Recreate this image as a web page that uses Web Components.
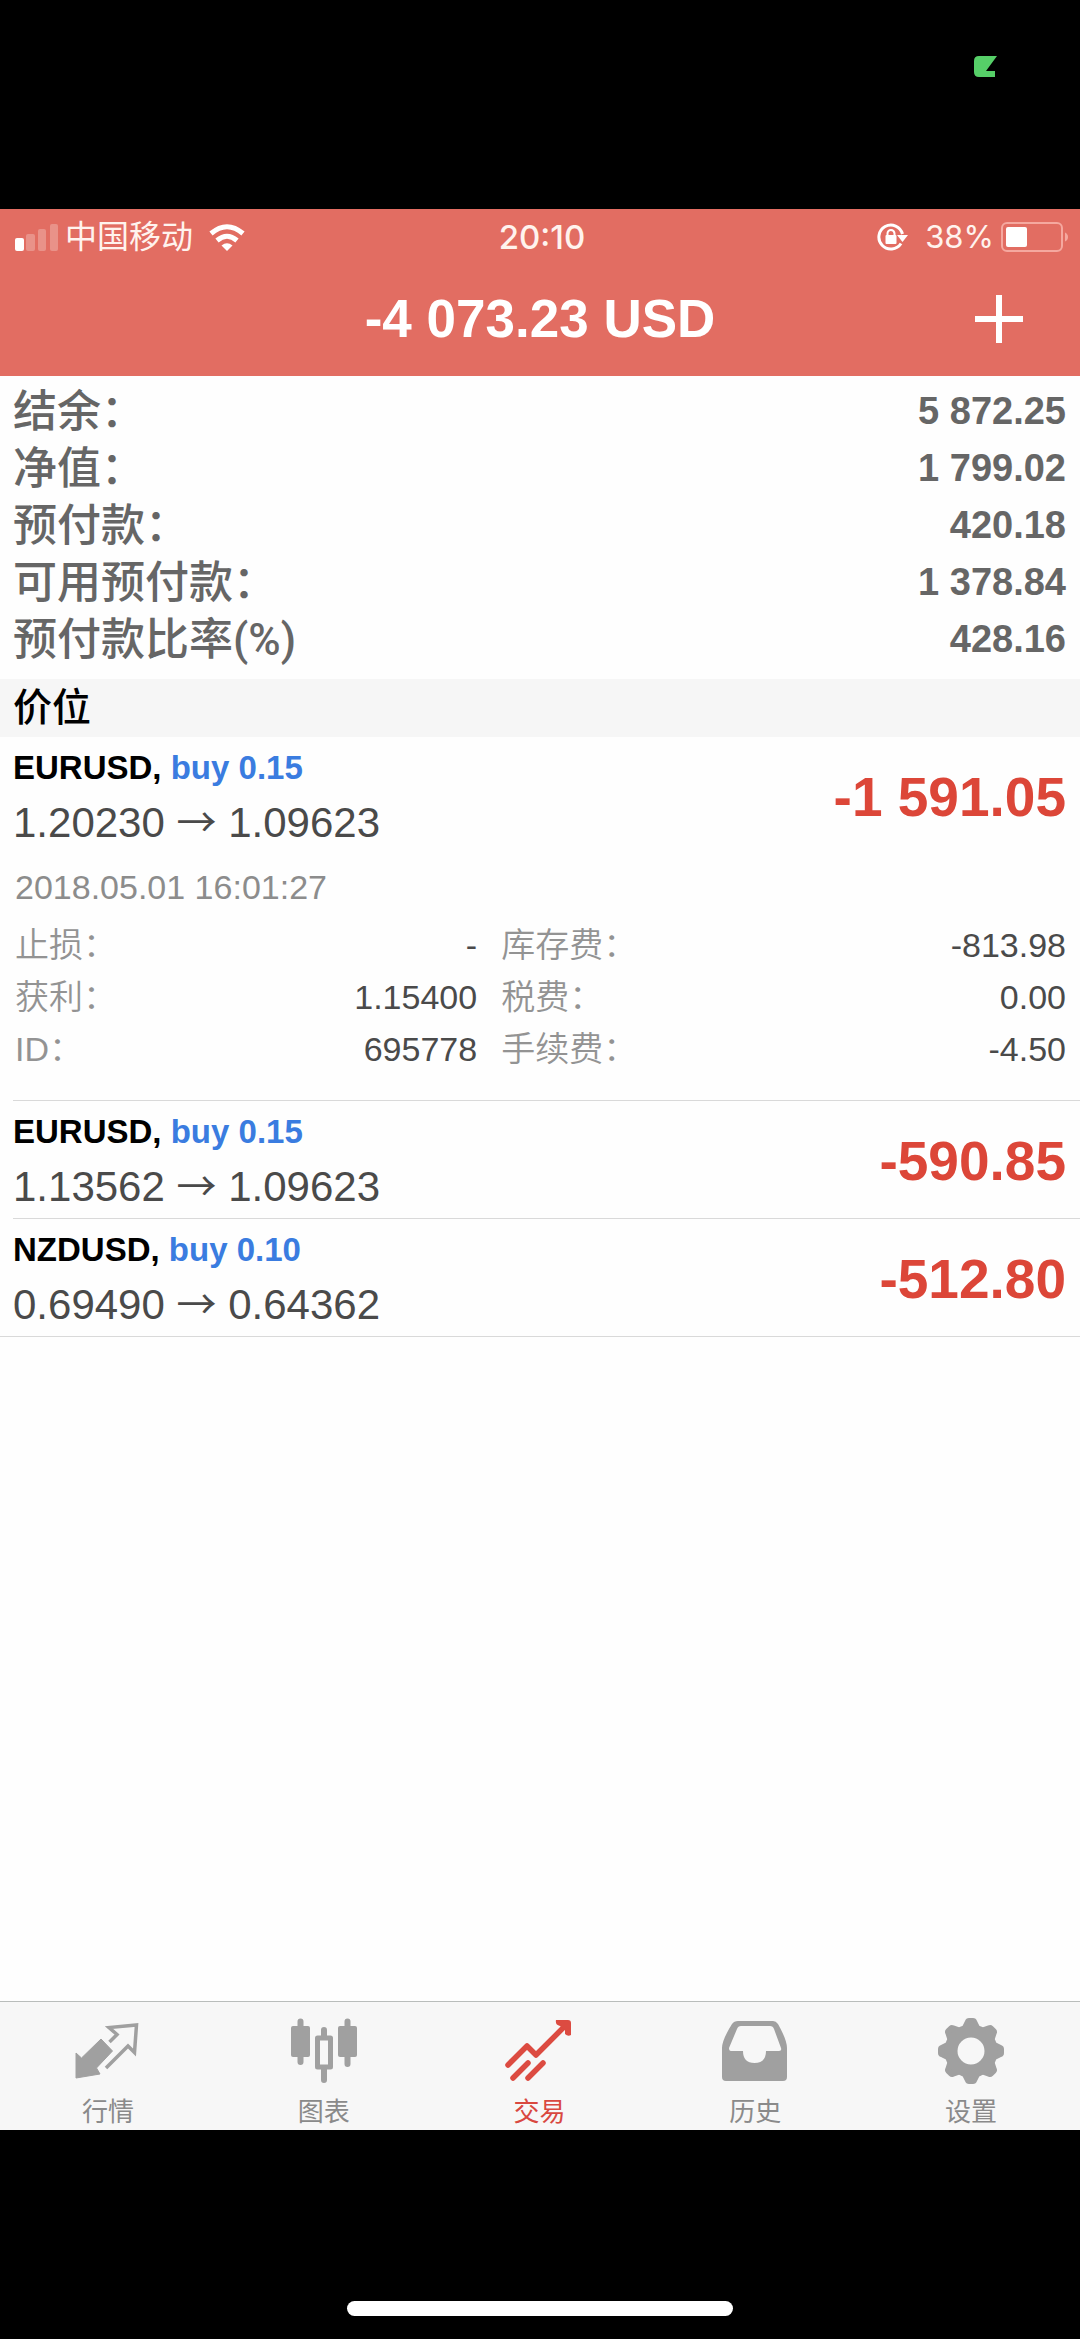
<!DOCTYPE html>
<html lang="zh-CN">
<head>
<meta charset="utf-8">
<meta name="viewport" content="width=device-width, initial-scale=1">
<title>交易</title>
<style>
html, body { margin: 0; background: #000; }
body {
  --cjk: Roboto, "Noto Sans CJK SC", sans-serif;
  --sans: "Liberation Sans", "Noto Sans CJK SC", sans-serif;
  --narrow: "Liberation Sans", sans-serif;
  --muted: #8c8c8c;
  --text: #4a4a4a;
  --loss: #dc4638;
  font-family: var(--sans);
}
</style>
</head>
<body>
<trade-app>
  <status-bar slot="top" carrier="中国移动" time="20:10" battery="38%"></status-bar>
  <nav-bar slot="top">-4 073.23 USD</nav-bar>
  <account-summary>
    <summary-row label="结余：">5 872.25</summary-row>
    <summary-row label="净值：">1 799.02</summary-row>
    <summary-row label="预付款：">420.18</summary-row>
    <summary-row label="可用预付款：">1 378.84</summary-row>
    <summary-row label="预付款比率(%)">428.16</summary-row>
  </account-summary>
  <section-title>价位</section-title>
  <position-item symbol="EURUSD" side="buy 0.15" open="1.20230" current="1.09623" profit="-1 591.05">
    <position-details time="2018.05.01 16:01:27">
      <detail-row label="止损：">-</detail-row>
      <detail-row label="库存费：">-813.98</detail-row>
      <detail-row label="获利：">1.15400</detail-row>
      <detail-row label="税费：">0.00</detail-row>
      <detail-row label="ID：">695778</detail-row>
      <detail-row label="手续费：">-4.50</detail-row>
    </position-details>
  </position-item>
  <position-item symbol="EURUSD" side="buy 0.15" open="1.13562" current="1.09623" profit="-590.85"></position-item>
  <position-item class="last" symbol="NZDUSD" side="buy 0.10" open="0.69490" current="0.64362" profit="-512.80"></position-item>
  <tab-bar slot="bottom">
    <tab-item icon="quotes">行情</tab-item>
    <tab-item icon="chart">图表</tab-item>
    <tab-item icon="trade" active>交易</tab-item>
    <tab-item icon="history">历史</tab-item>
    <tab-item icon="settings">设置</tab-item>
  </tab-bar>
</trade-app>

<script>
const define = (name, render) => customElements.define(name, class extends HTMLElement {
  constructor() {
    super();
    this.attachShadow({ mode: 'open' });
  }
  connectedCallback() {
    const t = document.createElement('template');
    t.innerHTML = render(k => this.getAttribute(k) || '', this);
    this.shadowRoot.replaceChildren(t.content.cloneNode(true));
  }
});

define('trade-app', () => `
<style>
:host { display: flex; flex-direction: column; min-height: 100vh; background: #000; }
.notch { display: flex; justify-content: flex-end; box-sizing: border-box; height: 209px; padding: 56px 83px 0 0; }
header { background: #e26d62; }
main { flex: 1; background: #fefefe; }
.home { display: flex; justify-content: center; align-items: flex-end; box-sizing: border-box; height: 209px; padding-bottom: 23px; }
.home i { width: 36%; max-width: 386px; height: 15px; border-radius: 8px; background: #fff; }
</style>
<div class="notch"><svg width="23" height="21" viewBox="0 0 23 21" aria-hidden="true"><path d="M5 0H23L12 15H21V21H5Q0 21 0 16V5Q0 0 5 0Z" fill="#56cf68"/></svg></div>
<header><slot name="top"></slot></header>
<main><slot></slot></main>
<slot name="bottom"></slot>
<div class="home"><i></i></div>`);

define('status-bar', a => `
<style>
:host { display: grid; grid-template-columns: 1fr auto 1fr; align-items: center; height: 56px; padding: 0 11px 0 15px; color: #fff3ee; font: 500 33px/40px Inter, sans-serif; }
.l, .r { display: flex; align-items: center; }
.l { font: 400 32px/40px var(--cjk); }
.r { justify-content: flex-end; font-weight: 400; font-size: 31px; }
.l svg:first-child { margin-right: 7px; }
.l svg:last-child { margin-left: 16px; }
.r svg:first-child { margin-right: 17px; }
.r svg:last-child { margin-left: 7px; }
</style>
<div class="l">
<svg width="43" height="28" viewBox="0 0 43 28" fill="#fff"><rect y="15" width="9" height="13" rx="2"/><g opacity=".25"><rect x="11" y="11" width="9" height="17" rx="2"/><rect x="23" y="6" width="8" height="22" rx="2"/><rect x="35" y="1" width="8" height="27" rx="2"/></g></svg>
<span>${a('carrier')}</span>
<svg width="36" height="27" viewBox="0 0 36 27" fill="none" stroke="#fff" stroke-width="5"><path d="M2 9.500Q18-4 34 9.500"/><path d="M8 16.500Q18 8 28 16.500"/><path d="M18 27L12.500 21.500Q18 17 23.500 21.500Z" fill="#fff" stroke="none"/></svg>
</div>
<span>${a('time')}</span>
<div class="r">
<svg width="31" height="28" viewBox="0 0 31 28" fill="none" stroke="#fff" stroke-width="3"><path d="M24 20.500A12 12 0 1 1 25.500 11"/><path d="M20 12H31L25.500 19Z" fill="#fff" stroke="none"/><rect x="8.500" y="12" width="11" height="9" rx="1" fill="#fff" stroke="none"/><path d="M10.500 13V10.500a3.500 3.500 0 0 1 7 0V13" stroke-width="2"/></svg>
<span>${a('battery')}</span>
<svg width="68" height="30" viewBox="0 0 68 30"><rect x="1" y="1" width="60" height="28" rx="5" fill="none" stroke="#f5a89f" stroke-width="2"/><rect x="5" y="5" width="21" height="20" rx="2" fill="#fff"/><path d="M64 10.500Q67 12 67 15T64 19.500Z" fill="#f5a89f"/></svg>
</div>`);

define('nav-bar', () => `
<style>
:host { display: grid; grid-template-columns: 1fr auto 1fr; align-items: center; box-sizing: border-box; height: 111px; padding: 0 48px 3px; color: #fff; }
h1 { grid-column: 2; margin: 0; font: 700 53px/72px var(--narrow); }
button { justify-self: end; display: flex; padding: 8px; border: 0; background: none; color: inherit; }
</style>
<h1><slot></slot></h1>
<button aria-label="新订单"><svg width="50" height="48" viewBox="0 0 50 48" fill="none" stroke="currentColor" stroke-width="6"><path d="M25 0V48M1 24H49"/></svg></button>`);

define('account-summary', () => `
<style>:host { display: block; padding: 8px 14px 10px 13px; }</style>
<slot></slot>`);

define('summary-row', a => `
<style>
:host { display: flex; justify-content: space-between; height: 57px; color: #666; font: 500 44px/57px var(--cjk); }
b { font: 700 38px/55px var(--narrow); }
</style>
<span>${a('label')}</span><b><slot></slot></b>`);

define('section-title', () => `
<style>
:host { display: block; background: #f6f6f6; }
h2 { margin: 0; padding: 0 13px; color: #000; font: 500 39px/58px var(--cjk); }
</style>
<h2><slot></slot></h2>`);

define('position-item', a => `
<style>
:host { display: block; }
article { margin-left: 13px; border-bottom: 1px solid #d9d9d9; }
:host(.last) article { margin-left: 0; padding-left: 13px; }
.head { display: flex; justify-content: space-between; align-items: center; padding: 3px 14px 4px 0; }
h3, p { margin: 0; }
h3 { color: #000; font: 700 33px/55px var(--narrow); }
h3 span { color: #3a7ce0; }
p { color: var(--text); font: 42px/55px var(--sans); }
i { font: 40px/1 "Noto Sans CJK SC", sans-serif; }
strong { margin-top: 4px; color: var(--loss); font: 700 55px/72px var(--narrow); }
</style>
<article>
<div class="head"><div><h3>${a('symbol')}, <span>${a('side')}</span></h3><p>${a('open')} <i>→</i> ${a('current')}</p></div><strong>${a('profit')}</strong></div>
<slot></slot>
</article>`);

define('position-details', a => `
<style>
:host { display: block; padding: 7px 14px 25px 2px; }
time { display: block; margin-bottom: 6px; color: var(--muted); font: 34px/52px var(--sans); }
.grid { display: grid; grid-template-columns: 9fr 11fr; column-gap: 24px; }
</style>
<time>${a('time')}</time><div class="grid"><slot></slot></div>`);

define('detail-row', a => `
<style>
:host { display: flex; justify-content: space-between; height: 52px; color: var(--text); font: 34px/52px var(--sans); }
span { color: #939393; font-weight: 350; }
</style>
<span>${a('label')}</span><div><slot></slot></div>`);

define('tab-bar', () => `
<style>
:host { display: block; background: #f7f7f7; border-top: 1px solid #b9bdbb; }
nav { display: grid; grid-template-columns: repeat(5, 1fr); padding-right: 1px; }
</style>
<nav><slot></slot></nav>`);

const tooth = n => `<path transform="rotate(${n * 45} 34 34)" d="M21 13L25 10L28 4Q29 1 32 1H36Q39 1 40 4L43 10L47 13Z"/>`;
const icons = {
  quotes: `<path d="M27 22L38.500 34L22.500 51L26 57L2 61V36L7.500 41Z" fill="currentColor" stroke="currentColor" stroke-width="1" stroke-linejoin="round"/><path d="M35.500 25L43 17.500L35 10.500L62.500 8L60.500 35.500L54 29L32 51" fill="none" stroke="currentColor" stroke-width="3.500"/>`,
  chart: `<g fill="currentColor"><rect x="1" y="9" width="19" height="31" rx="2"/><rect x="48" y="9" width="19" height="31" rx="2"/></g><g fill="none" stroke="currentColor"><rect x="27.500" y="21" width="13" height="29" stroke-width="5" stroke-linejoin="round"/><path d="M10.500 4.500V45M57.500 4.500V47M34 13V19M34 51V63" stroke-width="6" stroke-linecap="round"/></g>`,
  trade: `<g fill="none" stroke="currentColor" stroke-width="5.500" stroke-linecap="round" stroke-linejoin="round"><path d="M3 48L22 29L31 38L61 8M8 61L23 46M23 61L38 46"/></g><path d="M51 3H63Q66 3 66 6V18Q63 20 60 17V13L55 9Q50 8 51 3Z" fill="currentColor"/>`,
  history: `<path fill="currentColor" fill-rule="evenodd" d="M17 4H52Q55 4 57 7Q66 23 66 31V60Q66 64 62 64H5Q1 64 1 60V31Q1 23 11 7Q13 4 17 4ZM20 9Q17 9 16 12L8 31Q8 34 10 34H22Q22 46 33.500 46T45 34H58Q61 34 60 31L53 12Q52 9 49 9Z"/>`,
  settings: `<g fill="currentColor">${[0, 1, 2, 3, 4, 5, 6, 7].map(tooth).join('')}</g><circle cx="34" cy="34" r="20" fill="none" stroke="currentColor" stroke-width="13"/>`
};
define('tab-item', (a, el) => `
<style>
:host { display: block; }
a { display: flex; flex-direction: column; align-items: center; padding: 15px 0 1px; text-decoration: none; color: ${el.hasAttribute('active') ? '#d9483f' : '#8a8a8a'}; font: 26px/38px "Noto Sans CJK SC", sans-serif; }
svg { color: ${el.hasAttribute('active') ? '#dc4b41' : '#a0a0a0'}; margin-bottom: 6px; }
</style>
<a href="#${a('icon')}"><svg width="68" height="68" viewBox="0 0 68 68" aria-hidden="true">${icons[a('icon')]}</svg><slot></slot></a>`);
</script>
</body>
</html>
